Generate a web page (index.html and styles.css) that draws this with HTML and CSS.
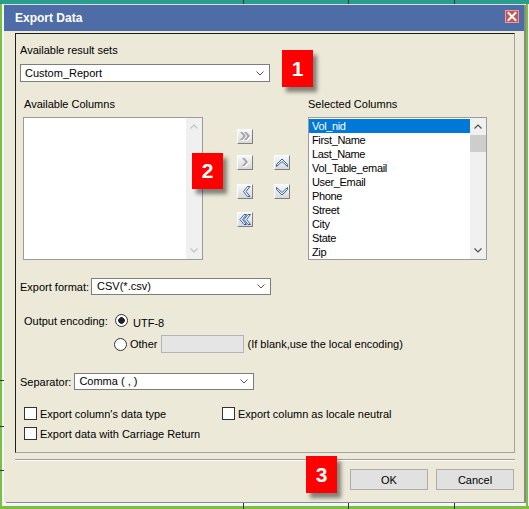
FILE: index.html
```html
<!DOCTYPE html>
<html>
<head>
<meta charset="utf-8">
<title>Export Data</title>
<link rel="stylesheet" href="styles.css">
</head>
<body>
<div class="desktop">
  <div class="dialog">
    <div class="titlebar">
      <span class="title">Export Data</span>
      <span class="close"><svg width="12" height="11" viewBox="0 0 12 11"><path d="M2.5 2 L9.5 9 M9.5 2 L2.5 9" stroke="#fff" stroke-width="2" stroke-linecap="square"/></svg></span>
    </div>
    <div class="body">
      <div class="panel">
        <div class="lbl">Available result sets</div>
        <div class="select s-result"><span>Custom_Report</span><svg class="chev" width="8" height="5" viewBox="0 0 8 5"><path d="M0.5 0.5 L4 4 L7.5 0.5" fill="none" stroke="#555" stroke-width="1"/></svg></div>

        <div class="columns">
          <div class="col col-left">
            <div class="lbl">Available Columns</div>
            <div class="list">
              <div class="items"></div>
              <div class="vscroll">
                <div class="sarrow"><svg width="8" height="5" viewBox="0 0 8 5"><path d="M0.5 4.5 L4 1 L7.5 4.5" fill="none" stroke="#c2c2c2" stroke-width="1.2"/></svg></div>
                <div class="track"></div>
                <div class="sarrow"><svg width="8" height="5" viewBox="0 0 8 5"><path d="M0.5 0.5 L4 4 L7.5 0.5" fill="none" stroke="#c2c2c2" stroke-width="1.2"/></svg></div>
              </div>
            </div>
          </div>

          <div class="movers">
            <div class="mbtn m-addall"><svg width="14" height="13" viewBox="0 0 14 13"><g transform="translate(1,1)" fill="#ffffff"><polygon points="2,2 4.5,2 8,6 4.5,10 2,10 5.5,6"/><polygon points="6,2 8.5,2 12,6 8.5,10 6,10 9.5,6"/></g><g fill="#a3a3a3"><polygon points="2,2 4.5,2 8,6 4.5,10 2,10 5.5,6"/><polygon points="6,2 8.5,2 12,6 8.5,10 6,10 9.5,6"/></g></svg></div>
            <div class="mbtn m-add"><svg width="14" height="13" viewBox="0 0 14 13"><polygon transform="translate(1,1)" points="4,2 6.5,2 10,6 6.5,10 4,10 7.5,6" fill="#fff"/><polygon points="4,2 6.5,2 10,6 6.5,10 4,10 7.5,6" fill="#a3a3a3"/></svg></div>
            <div class="mbtn m-rem"><svg width="14" height="13" viewBox="0 0 14 13"><polygon points="9.5,1.5 12,1.5 8,6.5 12,11.5 9.5,11.5 5.5,6.5" fill="#fff" stroke="#2d5fae" stroke-width="1" stroke-linejoin="round"/></svg></div>
            <div class="mbtn m-remall"><svg width="14" height="13" viewBox="0 0 14 13"><polygon points="6,1.5 8.5,1.5 4.5,6.5 8.5,11.5 6,11.5 2,6.5" fill="#fff" stroke="#2d5fae" stroke-width="1" stroke-linejoin="round"/><polygon points="10,1.5 12.5,1.5 8.5,6.5 12.5,11.5 10,11.5 6,6.5" fill="#fff" stroke="#2d5fae" stroke-width="1" stroke-linejoin="round"/></svg></div>
            <div class="mbtn m-up"><svg width="14" height="13" viewBox="0 0 14 13"><polygon points="1.5,8.5 7,3 12.5,8.5 12.5,10.5 7,5.5 1.5,10.5" fill="#fff" stroke="#2d5fae" stroke-width="1" stroke-linejoin="round"/></svg></div>
            <div class="mbtn m-down"><svg width="14" height="13" viewBox="0 0 14 13"><polygon points="1.5,2.5 7,7.5 12.5,2.5 12.5,4.5 7,10 1.5,4.5" fill="#fff" stroke="#2d5fae" stroke-width="1" stroke-linejoin="round"/></svg></div>
          </div>

          <div class="col col-right">
            <div class="lbl">Selected Columns</div>
            <div class="list">
              <div class="items">
                <div class="sel-item active">Vol_nid</div>
                <div class="sel-item">First_Name</div>
                <div class="sel-item">Last_Name</div>
                <div class="sel-item">Vol_Table_email</div>
                <div class="sel-item">User_Email</div>
                <div class="sel-item">Phone</div>
                <div class="sel-item">Street</div>
                <div class="sel-item">City</div>
                <div class="sel-item">State</div>
                <div class="sel-item">Zip</div>
              </div>
              <div class="vscroll">
                <div class="sarrow"><svg width="8" height="5" viewBox="0 0 8 5"><path d="M0.5 4.5 L4 1 L7.5 4.5" fill="none" stroke="#505050" stroke-width="1.2"/></svg></div>
                <div class="thumb"></div>
                <div class="track"></div>
                <div class="sarrow"><svg width="8" height="5" viewBox="0 0 8 5"><path d="M0.5 0.5 L4 4 L7.5 0.5" fill="none" stroke="#505050" stroke-width="1.2"/></svg></div>
              </div>
            </div>
          </div>
        </div>

        <div class="row r-format">
          <span>Export format:</span>
          <div class="select s-format"><span>CSV(*.csv)</span><svg class="chev" width="8" height="5" viewBox="0 0 8 5"><path d="M0.5 0.5 L4 4 L7.5 0.5" fill="none" stroke="#555" stroke-width="1"/></svg></div>
        </div>

        <div class="encoding">
          <span class="enc-label">Output encoding:</span>
          <div class="enc-options">
            <div class="opt-utf"><span class="radio checked"></span><span class="utf-text">UTF-8</span></div>
            <div class="opt-other"><span class="radio"></span><span class="other-text">Other</span><span class="textbox"></span><span class="hint">(If blank,use the local encoding)</span></div>
          </div>
        </div>

        <div class="row r-sep">
          <span>Separator:</span>
          <div class="select s-sep"><span>Comma ( , )</span><svg class="chev" width="8" height="5" viewBox="0 0 8 5"><path d="M0.5 0.5 L4 4 L7.5 0.5" fill="none" stroke="#555" stroke-width="1"/></svg></div>
        </div>

        <div class="checks">
          <div class="chk"><span class="box"></span><span>Export column's data type</span></div>
          <div class="chk"><span class="box"></span><span>Export column as locale neutral</span></div>
          <div class="chk"><span class="box"></span><span>Export data with Carriage Return</span></div>
        </div>

        <div class="badge b1">1</div>
        <div class="badge b2">2</div>
      </div>
      <div class="separator"></div>
      <div class="footer">
        <div class="btn">OK</div>
        <div class="btn">Cancel</div>
        <div class="badge b3">3</div>
      </div>
    </div>
  </div>
</div>
</body>
</html>
```
FILE: styles.css
```css
* { box-sizing: border-box; }
html, body { margin: 0; padding: 0; }
body {
  font-family: "Liberation Sans", Arial, sans-serif;
  font-size: 11px;
  color: #000;
}
.desktop {
  position: relative;
  width: 529px;
  height: 509px;
  overflow: hidden;
  padding: 4px 0 0 4px;
  background:
    linear-gradient(#333, #333) 243px 0 / 1px 4px no-repeat,
    linear-gradient(#333, #333) 348px 0 / 1px 4px no-repeat,
    linear-gradient(#333, #333) 454px 0 / 1px 4px no-repeat,
    linear-gradient(#333, #333) 243px 503px / 1px 6px no-repeat,
    linear-gradient(#333, #333) 348px 503px / 1px 6px no-repeat,
    linear-gradient(#333, #333) 454px 503px / 1px 6px no-repeat,
    linear-gradient(#333, #333) 0 380px / 4px 1px no-repeat,
    linear-gradient(#333, #333) 0 426px / 4px 1px no-repeat,
    linear-gradient(#333, #333) 0 470px / 4px 1px no-repeat,
    linear-gradient(#2a9c8a, #2a9c8a) 0 0 / 100% 4px no-repeat,
    linear-gradient(#7cc043, #7cc043) 0 0 / 2px 100% no-repeat,
    linear-gradient(#7cc043, #7cc043) 526px 0 / 2px 100% no-repeat,
    linear-gradient(#7cc043, #7cc043) 0 506px / 100% 3px no-repeat,
    #f3f8fb;
}
.dialog {
  width: 520px;
  height: 498px;
  background: #ece9d8;
  border-top: 1px solid #d6deeb;
  box-shadow: 2px 1px 0 #8a8a8a;
}
.titlebar {
  height: 26px;
  background: #4e6da6;
  display: flex;
  align-items: center;
  justify-content: space-between;
  padding: 0 5px 0 11px;
}
.title {
  color: #fff;
  font-weight: bold;
  font-size: 12px;
}
.close {
  align-self: flex-start;
  margin-top: 5px;
  width: 14px;
  height: 13px;
  background: #c9514f;
  border: 1px solid #e3a09e;
  display: flex;
  align-items: center;
  justify-content: center;
}
.body { padding: 2px 9px 0 11px; }
.panel {
  position: relative;
  height: 420px;
  border: 1px solid;
  border-color: #1e1e1e #a3a3a3 #a3a3a3 #1e1e1e;
  padding: 10px 0 0 4px;
}
.lbl { line-height: 13px; }
.select {
  display: flex;
  align-items: center;
  justify-content: space-between;
  background: #fff;
  border: 1px solid #7d7d7d;
  padding: 0 5px 0 4px;
  line-height: 13px;
}
.chev { flex: none; }
.s-result { width: 250px; height: 18px; margin-top: 7px; }
.columns { display: flex; margin-top: 16px; margin-left: 3px; }
.col-left { width: 180px; }
.col-left .lbl { padding-left: 1px; }
.col-right { width: 179px; }
.list {
  margin-top: 6px;
  height: 143px;
  border: 1px solid #9b9b9b;
  background: #fff;
  display: flex;
}
.items { flex: 1; padding-top: 1px; overflow: hidden; }
.vscroll {
  width: 16px;
  background: #f0f0f0;
  display: flex;
  flex-direction: column;
}
.sarrow {
  height: 17px;
  display: flex;
  align-items: center;
  justify-content: center;
}
.thumb { height: 17px; background: #cdcdcd; }
.track { flex: 1; }
.sel-item {
  height: 14px;
  line-height: 14px;
  padding-left: 3px;
  letter-spacing: -0.35px;
  white-space: nowrap;
}
.sel-item.active { background: #0078d7; color: #fff; }
.movers {
  width: 105px;
  padding: 31px 0 0 34px;
  display: grid;
  grid-template-columns: 16px 16px;
  column-gap: 21px;
  grid-template-rows: 26px 29px 28px 15px;
  align-content: start;
}
.mbtn {
  width: 16px;
  height: 15px;
  border: 1px solid;
  border-color: #fdfdfd #7f7f7f #7f7f7f #fdfdfd;
  background: linear-gradient(#f7f7f7, #d9d9d9);
  display: flex;
  align-items: center;
  justify-content: center;
}
.m-addall { grid-area: 1 / 1; }
.m-add { grid-area: 2 / 1; }
.m-rem { grid-area: 3 / 1; }
.m-remall { grid-area: 4 / 1; }
.m-up { grid-area: 2 / 2; }
.m-down { grid-area: 3 / 2; }

.row { display: flex; align-items: center; }
.r-format { margin-top: 18px; gap: 2px; }
.s-format { width: 180px; height: 17px; padding-left: 5px; }
.encoding { display: flex; margin-top: 19px; }
.enc-label { width: 95px; padding-left: 4px; line-height: 14px; }
.enc-options { display: flex; flex-direction: column; }
.opt-utf { display: flex; align-items: flex-start; height: 14px; }
.utf-text { margin-left: 5px; margin-top: 3px; line-height: 13px; }
.opt-other {
  display: flex;
  align-items: center;
  margin-top: 7px;
  margin-left: -1px;
  height: 18px;
}
.radio {
  flex: none;
  width: 13px;
  height: 13px;
  border: 1px solid #333;
  border-radius: 50%;
  background: #fff;
}
.radio.checked {
  background: radial-gradient(circle, #222 0 3px, #fff 3.6px);
}
.other-text { margin-left: 3px; }
.textbox {
  width: 83px;
  height: 18px;
  margin-left: 3px;
  background: #e5e5e5;
  border: 1px solid #b4b4b4;
}
.hint { margin-left: 4px; }
.r-sep { margin-top: 20px; gap: 3px; }
.s-sep { width: 180px; height: 17px; }
.checks {
  margin-top: 17px;
  margin-left: 4px;
  display: grid;
  grid-template-columns: 198px auto;
  row-gap: 7px;
}
.chk { display: flex; align-items: center; gap: 3px; height: 13px; }
.box {
  flex: none;
  width: 13px;
  height: 13px;
  border: 1px solid #333;
  background: #fff;
}
.separator {
  margin-top: 6px;
  height: 2px;
  border-top: 1px solid #a0a0a0;
  border-bottom: 1px solid #fff;
}
.footer {
  position: relative;
  margin-top: 8px;
  display: flex;
  justify-content: flex-end;
  gap: 8px;
  padding-right: 1px;
}
.btn {
  width: 78px;
  height: 21px;
  background: #e1e1e1;
  border: 1px solid #adadad;
  display: flex;
  align-items: center;
  justify-content: center;
}
.badge {
  position: absolute;
  width: 31px;
  height: 37px;
  background: #ff0000;
  color: #fff;
  font-weight: bold;
  font-size: 21px;
  display: flex;
  align-items: center;
  justify-content: center;
  box-shadow: 4px 5px 4px rgba(0, 0, 0, 0.45);
}
.b1 { left: 266px; top: 16px; }
.b2 { left: 176px; top: 119px; height: 36px; }
.b3 { left: 291px; top: -13px; }
```
